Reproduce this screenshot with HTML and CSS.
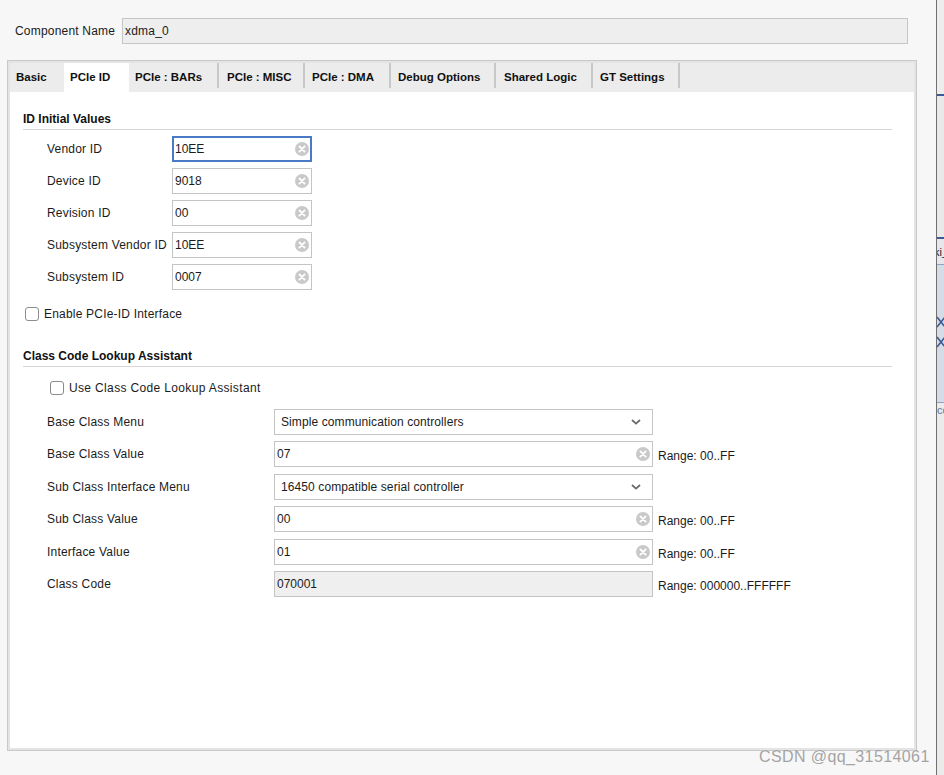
FILE: index.html
```html
<!DOCTYPE html>
<html>
<head>
<meta charset="utf-8">
<link rel="stylesheet" href="styles.css">
</head>
<body>
<div class="app">
  <div class="main">
    <div class="comp-row">
      <span class="comp-label">Component Name</span>
      <div class="comp-input">xdma_0</div>
    </div>
    <div class="panel">
      <div class="tabs">
        <div class="tab t1">Basic</div>
        <div class="tab t2 active">PCIe ID</div>
        <div class="tab t3 sep">PCIe : BARs</div>
        <div class="tab t4 sep">PCIe : MISC</div>
        <div class="tab t5 sep">PCIe : DMA</div>
        <div class="tab t6 sep">Debug Options</div>
        <div class="tab t7 sep">Shared Logic</div>
        <div class="tab t8 sep">GT Settings</div>
      </div>
      <div class="content">
        <div class="section-title">ID Initial Values</div>
        <div class="id-rows">
          <div class="row">
            <span class="lbl">Vendor ID</span>
            <div class="field small focused"><span class="val">10EE</span><svg class="clear" width="14" height="14" viewBox="0 0 14 14"><circle cx="7" cy="7" r="7" fill="#c9c9c9"/><path d="M4.4 4.4L9.6 9.6M9.6 4.4L4.4 9.6" stroke="#fff" stroke-width="1.9" stroke-linecap="round"/></svg></div>
          </div>
          <div class="row">
            <span class="lbl">Device ID</span>
            <div class="field small"><span class="val">9018</span><svg class="clear" width="14" height="14" viewBox="0 0 14 14"><circle cx="7" cy="7" r="7" fill="#c9c9c9"/><path d="M4.4 4.4L9.6 9.6M9.6 4.4L4.4 9.6" stroke="#fff" stroke-width="1.9" stroke-linecap="round"/></svg></div>
          </div>
          <div class="row">
            <span class="lbl">Revision ID</span>
            <div class="field small"><span class="val">00</span><svg class="clear" width="14" height="14" viewBox="0 0 14 14"><circle cx="7" cy="7" r="7" fill="#c9c9c9"/><path d="M4.4 4.4L9.6 9.6M9.6 4.4L4.4 9.6" stroke="#fff" stroke-width="1.9" stroke-linecap="round"/></svg></div>
          </div>
          <div class="row">
            <span class="lbl">Subsystem Vendor ID</span>
            <div class="field small"><span class="val">10EE</span><svg class="clear" width="14" height="14" viewBox="0 0 14 14"><circle cx="7" cy="7" r="7" fill="#c9c9c9"/><path d="M4.4 4.4L9.6 9.6M9.6 4.4L4.4 9.6" stroke="#fff" stroke-width="1.9" stroke-linecap="round"/></svg></div>
          </div>
          <div class="row">
            <span class="lbl">Subsystem ID</span>
            <div class="field small"><span class="val">0007</span><svg class="clear" width="14" height="14" viewBox="0 0 14 14"><circle cx="7" cy="7" r="7" fill="#c9c9c9"/><path d="M4.4 4.4L9.6 9.6M9.6 4.4L4.4 9.6" stroke="#fff" stroke-width="1.9" stroke-linecap="round"/></svg></div>
          </div>
        </div>
        <div class="check cb1"><span class="box"></span><span>Enable PCIe-ID Interface</span></div>

        <div class="section-title s2">Class Code Lookup Assistant</div>
        <div class="check cb2"><span class="box"></span><span>Use Class Code Lookup Assistant</span></div>

        <div class="cc-rows">
          <div class="row">
            <span class="lbl2">Base Class Menu</span>
            <div class="field wide select"><span class="val">Simple communication controllers</span><svg class="chev" width="10" height="6" viewBox="0 0 10 6"><path d="M1 1L5 4.6L9 1" fill="none" stroke="#6b6b6b" stroke-width="1.8"/></svg></div>
          </div>
          <div class="row">
            <span class="lbl2">Base Class Value</span>
            <div class="field wide"><span class="val">07</span><svg class="clear" width="14" height="14" viewBox="0 0 14 14"><circle cx="7" cy="7" r="7" fill="#c9c9c9"/><path d="M4.4 4.4L9.6 9.6M9.6 4.4L4.4 9.6" stroke="#fff" stroke-width="1.9" stroke-linecap="round"/></svg></div>
            <span class="range">Range: 00..FF</span>
          </div>
          <div class="row">
            <span class="lbl2">Sub Class Interface Menu</span>
            <div class="field wide select"><span class="val">16450 compatible serial controller</span><svg class="chev" width="10" height="6" viewBox="0 0 10 6"><path d="M1 1L5 4.6L9 1" fill="none" stroke="#6b6b6b" stroke-width="1.8"/></svg></div>
          </div>
          <div class="row">
            <span class="lbl2">Sub Class Value</span>
            <div class="field wide"><span class="val">00</span><svg class="clear" width="14" height="14" viewBox="0 0 14 14"><circle cx="7" cy="7" r="7" fill="#c9c9c9"/><path d="M4.4 4.4L9.6 9.6M9.6 4.4L4.4 9.6" stroke="#fff" stroke-width="1.9" stroke-linecap="round"/></svg></div>
            <span class="range">Range: 00..FF</span>
          </div>
          <div class="row">
            <span class="lbl2">Interface Value</span>
            <div class="field wide"><span class="val">01</span><svg class="clear" width="14" height="14" viewBox="0 0 14 14"><circle cx="7" cy="7" r="7" fill="#c9c9c9"/><path d="M4.4 4.4L9.6 9.6M9.6 4.4L4.4 9.6" stroke="#fff" stroke-width="1.9" stroke-linecap="round"/></svg></div>
            <span class="range">Range: 00..FF</span>
          </div>
          <div class="row">
            <span class="lbl2">Class Code</span>
            <div class="field wide disabled"><span class="val">070001</span></div>
            <span class="range">Range: 000000..FFFFFF</span>
          </div>
        </div>
      </div>
    </div>
  </div>
  <div class="divider"></div>
  <div class="side">
    <div class="s-top"></div>
    <div class="s-blue"></div>
    <div class="s-gap"></div>
    <div class="s-blue"></div>
    <div class="s-tab">ki_</div>
    <div class="s-grid">
      <svg class="s-x1" width="10" height="12" viewBox="0 0 10 12"><path d="M0 1L8 11M8 1L0 11" stroke="#3d5a96" stroke-width="1.6"/></svg>
      <svg class="s-x2" width="10" height="12" viewBox="0 0 10 12"><path d="M0 1L8 11M8 1L0 11" stroke="#3d5a96" stroke-width="1.6"/></svg>
    </div>
    <div class="s-rest">co</div>
  </div>
  <div class="watermark">CSDN @qq_31514061</div>
</div>
</body>
</html>
```

FILE: styles.css
```css
* { box-sizing: border-box; }

html, body {
  margin: 0;
  padding: 0;
}

body {
  width: 944px;
  height: 775px;
  overflow: hidden;
  background: #f7f7f7;
  font-family: "Liberation Sans", Arial, sans-serif;
  font-size: 12px;
  letter-spacing: 0.2px;
  color: #1b1b1b;
}

.app {
  position: relative;
  display: flex;
  height: 775px;
}

.main {
  width: 936px;
  flex: none;
}

/* component name */
.comp-row {
  display: flex;
  align-items: center;
  margin-top: 18px;
  padding-left: 15px;
}

.comp-label {
  width: 107px;
  flex: none;
}

.comp-input {
  width: 786px;
  height: 26px;
  line-height: 24px;
  border: 1px solid #c6c6c6;
  background: #eeeeee;
  padding-left: 2px;
}

/* tab panel */
.panel {
  margin-top: 16px;
  margin-left: 7px;
  width: 910px;
  height: 691px;
  border: 1px solid #c9c9c9;
  background: #e4e4e4;
  padding: 2px;
  display: flex;
  flex-direction: column;
}

.tabs {
  display: flex;
  height: 29px;
  background: #ececec;
  flex: none;
}

.tab {
  position: relative;
  height: 29px;
  line-height: 29px;
  font-weight: bold;
  font-size: 11.5px;
  letter-spacing: 0;
  padding-left: 7px;
  white-space: nowrap;
  color: #111;
}

.tab.active { background: #ffffff; }

.tab.sep::after {
  content: "";
  position: absolute;
  right: 0;
  top: 0;
  width: 2px;
  height: 25px;
  background: #c8c8c8;
}

.t1 { width: 54px; padding-left: 6px; }
.t2 { width: 65px; padding-left: 6px; }
.t3 { width: 90px; padding-left: 6px; }
.t4 { width: 86px; padding-left: 8px; }
.t5 { width: 86px; }
.t6 { width: 105px; }
.t7 { width: 97px; padding-left: 8px; }
.t8 { width: 87px; }

.content {
  flex: 1;
  background: #ffffff;
  padding: 0 22px 0 13px;
}

.section-title {
  margin-top: 19px;
  font-weight: bold;
  letter-spacing: 0;
  line-height: 16px;
  padding-bottom: 2px;
  border-bottom: 1px solid #d6d6d6;
  color: #111;
}

.section-title.s2 { margin-top: 27px; }

/* rows */
.id-rows {
  display: flex;
  flex-direction: column;
  gap: 6px;
  margin-top: 6px;
}

.cc-rows {
  display: flex;
  flex-direction: column;
  gap: 6.4px;
  margin-top: 14px;
}

.row {
  display: flex;
  align-items: center;
  height: 26px;
}

.lbl {
  margin-left: 24px;
  width: 125px;
  flex: none;
  white-space: nowrap;
}

.lbl2 {
  margin-left: 24px;
  width: 227px;
  flex: none;
}

.field {
  display: flex;
  align-items: center;
  justify-content: space-between;
  height: 26px;
  border: 1px solid #c4c4c4;
  background: #fff;
  padding: 0 2px 0 2px;
  flex: none;
  letter-spacing: 0;
}

.field.small { width: 140px; }
.field.wide { width: 379px; }

.field.focused {
  border: 2px solid #4a79c6;
  padding: 0 1px 0 1px;
}

.field.select { padding: 0 11px 0 6px; letter-spacing: 0.1px; }

.field.disabled { background: #efefef; }

.clear { display: block; flex: none; }
.chev { display: block; flex: none; }

.range {
  margin-left: 5px;
  padding-top: 4px;
  white-space: nowrap;
  letter-spacing: 0;
}

/* checkboxes */
.check {
  display: flex;
  align-items: center;
  height: 14px;
}

.check .box {
  width: 14px;
  height: 14px;
  border: 1px solid #8c8c8c;
  border-radius: 3px;
  background: #fff;
  margin-right: 5px;
  flex: none;
}

.cb1 { margin-top: 17px; margin-left: 2px; }
.cb2 { margin-top: 14px; margin-left: 27px; letter-spacing: 0.35px; }

/* neighbouring window strip */
.divider {
  width: 1px;
  flex: none;
  background: #707070;
}

.side {
  flex: 1;
  display: flex;
  flex-direction: column;
  background: #ebebeb;
  overflow: hidden;
}

.s-top { height: 94px; background: #ededed; }
.s-blue { height: 2px; background: #3d5a98; }
.s-gap { height: 141px; background: #e9e9e9; }
.s-tab {
  height: 26px;
  line-height: 26px;
  font-size: 11px;
  letter-spacing: 0;
  margin-left: -3px;
  background: #e6e7ea;
  border-bottom: 1px solid #8fa3c2;
  white-space: nowrap;
  color: #222;
}
.s-grid {
  position: relative;
  height: 138px;
  background: #d4dce6;
  border-bottom: 1px solid #8fa3c2;
}
.s-x1 { position: absolute; left: 0; top: 51px; }
.s-x2 { position: absolute; left: 0; top: 71px; }
.s-rest {
  flex: 1;
  font-size: 11px;
  letter-spacing: 0;
  color: #5a74a8;
  white-space: nowrap;
  padding-top: 1px;
}

.watermark {
  position: absolute;
  left: 759px;
  top: 748px;
  font-size: 16px;
  letter-spacing: 0.4px;
  line-height: 18px;
  color: #a3a3a3;
  white-space: nowrap;
  text-shadow: 0 0 1px #ffffff;
}
```
